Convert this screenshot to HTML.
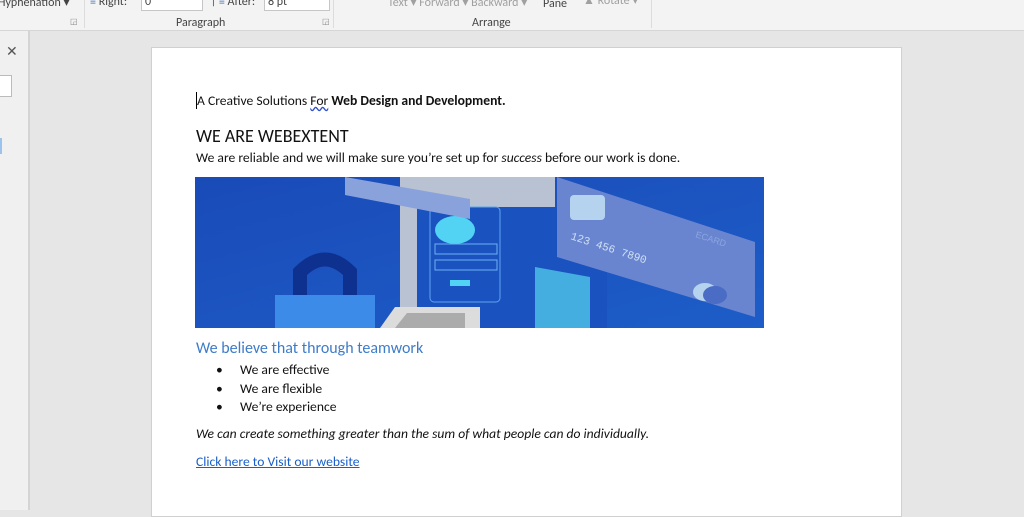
<!DOCTYPE html>
<html><head><meta charset="utf-8"><style>
*{margin:0;padding:0;box-sizing:border-box}
body{width:1024px;height:510px;overflow:hidden;background:#e6e6e6;font-family:Carlito,"Liberation Sans",sans-serif;position:relative}
.rib{position:absolute;left:0;top:0;width:1024px;height:31px;background:#f3f3f3;border-bottom:1px solid #d6d6d6;font-size:12px;color:#444}
.rib span{position:absolute;white-space:nowrap}
.g{color:#a0a0a0}
.box{position:absolute;height:13px;background:#fff;border:1px solid #c6c6c6;top:-2px}
.sep{position:absolute;top:0;width:1px;height:28px;background:#dcdcdc}
.left{position:absolute;left:0;top:31px;width:30px;height:479px;background:#f0f0f0;border-right:2px solid #d4d4d4}
.page{position:absolute;left:151px;top:47px;width:751px;height:470px;background:#fff;border:1px solid #d0d0d0}
.t{position:absolute;left:44px;white-space:nowrap;color:#111;font-size:13.6px}
</style></head><body>
<div class="rib">
<span style="left:-2px;top:-5px">Hyphenation ▾</span>
<span style="left:90px;top:-5px"><span style="position:static;color:#3a6ab0">≡</span> Right:</span>
<div class="box" style="left:141px;width:62px"><span style="left:3px;top:-4px">0</span></div>
<span style="left:208px;top:-5px"><span style="position:static;color:#3a6ab0">↑≡</span> After:</span>
<div class="box" style="left:264px;width:66px"><span style="left:3px;top:-4px">8 pt</span></div>
<span style="left:176px;top:16px">Paragraph</span>
<span style="left:70px;top:17px;font-size:8px;color:#888">◲</span>
<span style="left:322px;top:17px;font-size:8px;color:#888">◲</span>
<div class="sep" style="left:84px"></div><div class="sep" style="left:333px"></div><div class="sep" style="left:651px"></div>
<span class="g" style="left:388px;top:-5px">Text ▾ Forward ▾ Backward ▾</span>
<span style="left:543px;top:-3px">Pane</span>
<span class="g" style="left:583px;top:-7px">▲ Rotate ▾</span>
<span style="left:472px;top:16px">Arrange</span>
</div>
<div class="left">
<span style="position:absolute;left:6px;top:12px;font-size:14px;color:#555">✕</span>
<div style="position:absolute;left:-2px;top:44px;width:14px;height:22px;background:#fff;border:1px solid #bbb"></div>
<div style="position:absolute;left:0;top:107px;width:2px;height:16px;background:#9cc3ee"></div>
</div>
<div class="page">
<div class="t" style="top:44px"><span style="border-left:1px solid #000">A</span> Creative Solutions <span style="text-decoration:underline wavy #3050d0">For</span> <b>Web Design and Development.</b></div>
<div class="t" style="top:77px;font-size:18px">WE ARE WEBEXTENT</div>
<div class="t" style="top:101px">We are reliable and we will make sure you’re set up for <i>success</i> before our work is done.</div>
<svg style="position:absolute;left:43px;top:129px" width="569" height="151" viewBox="0 0 569 151">
<defs><linearGradient id="bg" x1="0" y1="0" x2="1" y2="1"><stop offset="0" stop-color="#1a4bb8"/><stop offset="1" stop-color="#1d5dc8"/></linearGradient></defs>
<rect width="569" height="151" fill="url(#bg)"/>
<path d="M205 0 L205 151 L222 151 L222 20 L360 45 L360 0Z" fill="#b8c2d2"/>
<rect x="222" y="30" width="190" height="121" fill="#1a52c0"/>
<rect x="235" y="30" width="70" height="95" rx="4" fill="none" stroke="#5ea7f0" stroke-width="1"/>
<ellipse cx="260" cy="53" rx="20" ry="14" fill="#52d3f4"/>
<rect x="240" y="67" width="62" height="10" fill="none" stroke="#6fb0f0"/>
<rect x="240" y="83" width="62" height="10" fill="none" stroke="#6fb0f0"/>
<rect x="255" y="103" width="20" height="6" fill="#52d3f4"/>
<path d="M150 0 L275 22 L275 42 L150 18Z" fill="#8aa2dc"/>
<path d="M362 0 L560 65 L560 140 L362 80Z" fill="#6a85d0"/>
<rect x="375" y="18" width="35" height="25" rx="4" fill="#b5d3ef"/>
<text x="375" y="62" fill="#cfe0f5" font-size="11" font-family="Liberation Mono" transform="rotate(18 375 62)">123 456 7890</text>
<text x="500" y="60" fill="#8ba6e0" font-size="9" font-family="Liberation Sans" transform="rotate(18 500 60)">ECARD</text>
<ellipse cx="510" cy="115" rx="12" ry="9" fill="#b5d3ef"/><ellipse cx="520" cy="118" rx="12" ry="9" fill="#4a6cc4"/>
<path d="M340 90 L395 100 L395 151 L340 151Z" fill="#45aee0"/>
<path d="M105 151 L105 95 Q130 70 155 95 L155 151" fill="none" stroke="#0e3190" stroke-width="14"/>
<rect x="80" y="118" width="100" height="33" fill="#3c8be8"/>
<path d="M185 151 L200 130 L285 130 L285 151Z" fill="#dcdcdc"/>
<path d="M200 151 L212 136 L270 136 L270 151Z" fill="#8a8a8a" opacity="0.6"/>
</svg>
<div class="t" style="top:291px;font-size:16px;color:#3d7cc9">We believe that through teamwork</div>
<div class="t" style="top:313px;left:64px">•</div><div class="t" style="top:313px;left:88px">We are effective</div>
<div class="t" style="top:332px;left:64px">•</div><div class="t" style="top:332px;left:88px">We are flexible</div>
<div class="t" style="top:350px;left:64px">•</div><div class="t" style="top:350px;left:88px">We’re experience</div>
<div class="t" style="top:377px;font-style:italic">We can create something greater than the sum of what people can do individually.</div>
<div class="t" style="top:405px;color:#1a5fc9;text-decoration:underline">Click here to Visit our website</div>
</div>
</body></html>
